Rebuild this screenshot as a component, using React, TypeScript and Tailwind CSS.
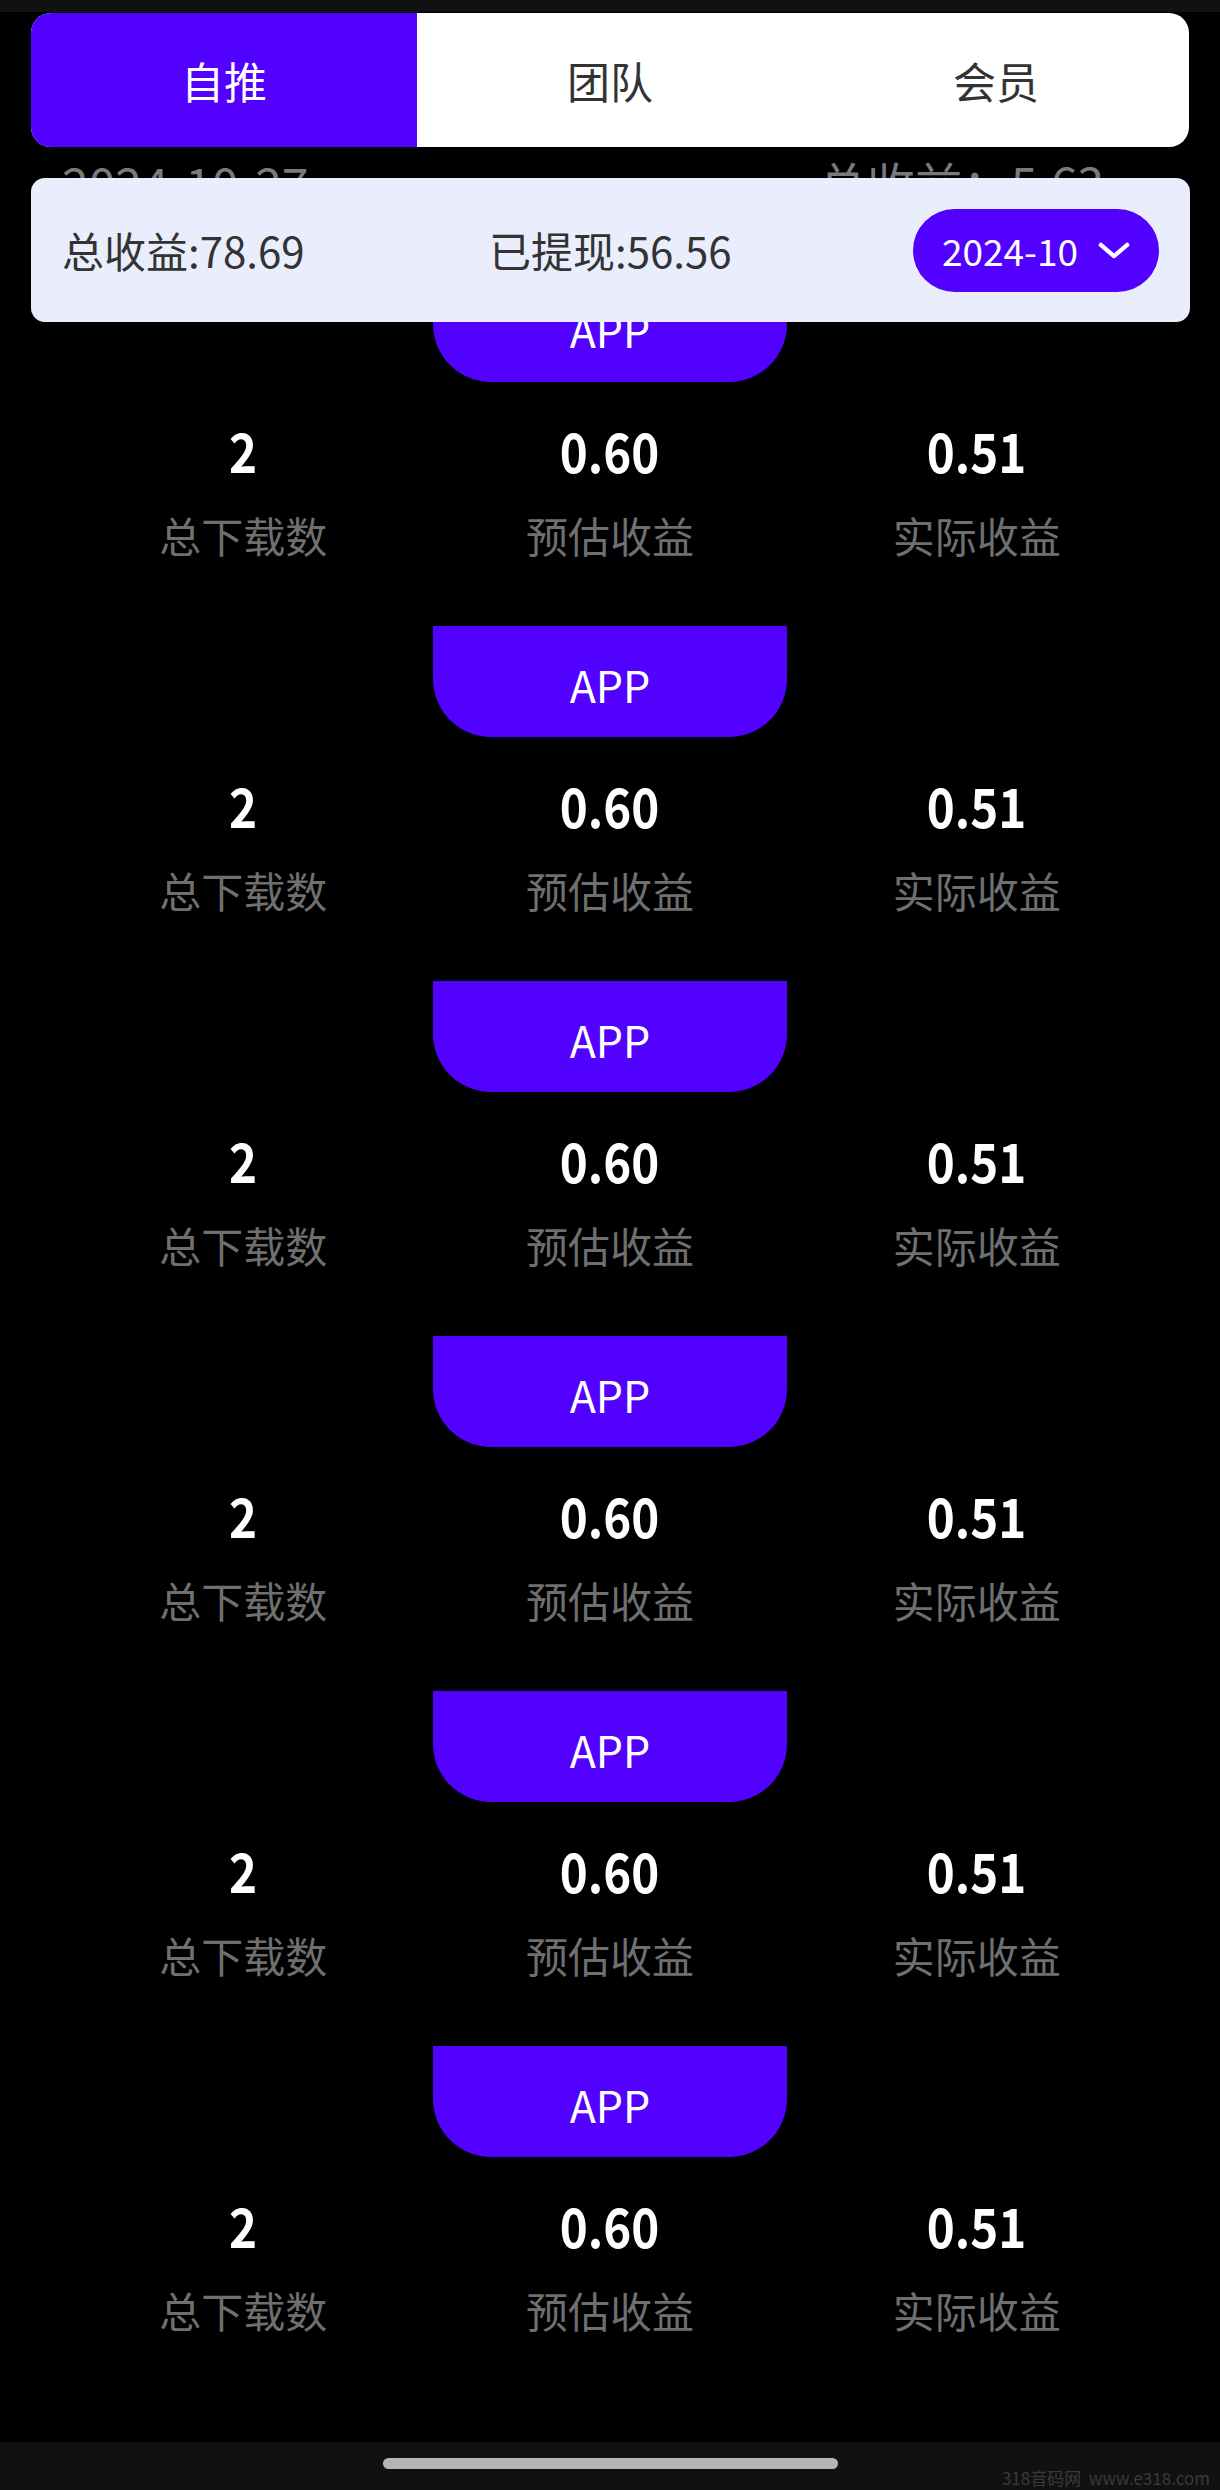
import React, { useState } from 'react';

const font = { fontFamily: '"Noto Sans CJK SC", "Noto Sans", sans-serif' };

type Item = { downloads: string; estimate: string; actual: string };

const items: Item[] = Array.from({ length: 6 }, () => ({
  downloads: '2',
  estimate: '0.60',
  actual: '0.51',
}));

const tabs = ['自推', '团队', '会员'];

const Chevron: React.FC<{ up?: boolean; className?: string }> = ({ up, className }) => (
  <svg viewBox="0 0 34 18" className={className} fill="none">
    <path
      d={up ? 'M3 15 L17 3 L31 15' : 'M3 3 L17 15 L31 3'}
      stroke="currentColor"
      strokeWidth="4.5"
      strokeLinecap="round"
      strokeLinejoin="round"
    />
  </svg>
);

export default function App() {
  const [active, setActive] = useState(0);

  return (
    <div className="relative w-[1220px] h-[2490px] bg-black overflow-hidden" style={font}>
      {/* status strip */}
      <div className="h-[12px] bg-[#111111]" />

      {/* Tabs */}
      <div className="mx-[31px] mt-[1px] h-[134px] flex bg-white rounded-[20px] overflow-hidden">
        {tabs.map((t, i) => (
          <button
            key={t}
            onClick={() => setActive(i)}
            className={`flex-1 flex items-center justify-center text-[43px] leading-none ${
              active === i ? 'bg-[#5200ff] text-white' : 'text-[#333333]'
            }`}
          >
            {t}
          </button>
        ))}
      </div>

      {/* Day row, mostly hidden under the summary card */}
      <div className="flex justify-between items-start pl-[62px] pr-[70px] mt-[11px] text-[48px] leading-none text-[#7a7a7a]">
        <span>2024-10-27</span>
        <span className="flex items-center gap-[22px]">
          总收益：5.63
          <Chevron up className="w-[24px] h-[13px] mt-[10px]" />
        </span>
      </div>

      {/* Summary card */}
      <div className="absolute top-[178px] left-[31px] right-[30px] h-[144px] z-10 bg-[#e9edfc] rounded-[14px] flex items-center pl-[31px] pr-[31px]">
        <div className="w-[427px] text-[42px] leading-none text-[#333333]">总收益:78.69</div>
        <div className="flex-1 text-[42px] leading-none text-[#333333]">已提现:56.56</div>
        <button className="h-[83px] w-[246px] rounded-full bg-[#5200ff] text-white flex items-center justify-center gap-[20px] text-[37px] leading-none">
          <span>2024-10</span>
          <Chevron className="w-[32px] h-[17px]" />
        </button>
      </div>

      {/* List */}
      <div className="flex flex-col mt-[65px]">
        {items.map((it, idx) => (
          <div key={idx} className="h-[355px] flex flex-col items-center">
            <div className="w-[354px] h-[111px] bg-[#5200ff] rounded-b-[58px] flex items-center justify-center pt-[6px] text-white text-[43px] leading-none">
              APP
            </div>
            <div className="w-full px-[60px] grid grid-cols-3 mt-[41px]">
              {[
                [it.downloads, '总下载数'],
                [it.estimate, '预估收益'],
                [it.actual, '实际收益'],
              ].map(([v, l]) => (
                <div key={l} className="flex flex-col items-center">
                  <div className="text-[54px] leading-none font-bold text-white scale-x-[0.88]">{v}</div>
                  <div className="mt-[37px] text-[42px] leading-none text-[#6f6f6f]">{l}</div>
                </div>
              ))}
            </div>
          </div>
        ))}
      </div>

      {/* bottom nav bar */}
      <div className="absolute bottom-0 left-0 right-0 h-[48px] bg-[#111111] flex justify-center">
        <div className="mt-[16px] w-[455px] h-[11px] rounded-full bg-[#b5b5b5]" />
        <span className="absolute right-[10px] bottom-[4px] text-[17px] leading-none text-[#3a3a3a]">
          318音码网&nbsp;&nbsp;www.e318.com
        </span>
      </div>
    </div>
  );
}
